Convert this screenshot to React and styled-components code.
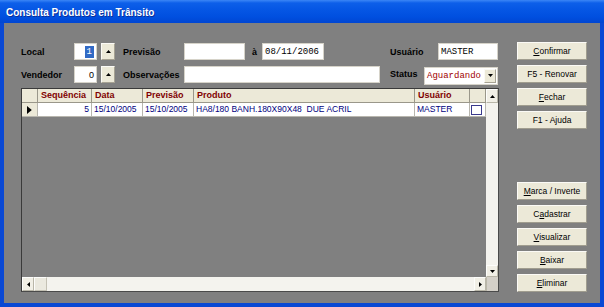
import React from 'react';
import styled, { createGlobalStyle } from 'styled-components';

const Global = createGlobalStyle`
  html, body { margin: 0; padding: 0; background: #0a4bd8; }
  body { font-family: "Liberation Sans", Arial, sans-serif; }
  * { box-sizing: border-box; }
`;

const Window = styled.div`
  width: 604px;
  height: 307px;
  display: flex;
  flex-direction: column;
  background: #0948d4;
  overflow: hidden;
`;

const TitleBar = styled.div`
  height: 23px;
  flex: none;
  display: flex;
  align-items: center;
  padding-left: 6px;
  padding-top: 1px;
  background: linear-gradient(to bottom, #3b86f6 0px, #0d5fe9 3px, #0556e4 10px, #004fdf 17px, #0046d2 23px);
  color: #fff;
  font: bold 10px "Liberation Sans", Arial, sans-serif;
  text-shadow: 1px 1px 0 #0b2f99;
`;

const Client = styled.div`
  flex: 1;
  margin: 0 4px 4px;
  background: #808080;
  display: flex;
  padding: 19px 0 0 17px;
  gap: 18px;
`;

const LeftCol = styled.div`
  width: 478px;
  display: flex;
  flex-direction: column;
`;

const FormRow = styled.div`
  display: flex;
  align-items: center;
  height: 17px;
  margin-top: ${p => p.$mt}px;
`;

const Label = styled.div`
  width: ${p => p.$w}px;
  flex: none;
  font: bold 9px "Liberation Sans", Arial, sans-serif;
  color: #000;
  padding-left: ${p => p.$pl || 0}px;
  margin-top: ${p => p.$dy || 0}px;
  white-space: nowrap;
`;

const Input = styled.div`
  width: ${p => p.$w}px;
  height: 17px;
  flex: none;
  background: #fff;
  border: 1px solid #d6d3c9;
  display: flex;
  align-items: center;
  justify-content: ${p => (p.$right ? 'flex-end' : 'flex-start')};
  padding: 0 2px;
  font: ${p => (p.$mono ? '9px "Liberation Mono", "Courier New", monospace' : '9px "Liberation Sans", Arial, sans-serif')};
  color: ${p => p.$color || '#000'};
`;

const Selected = styled.span`
  background: #316ac5;
  color: #fff;
  padding: 1px 2px;
  font-family: "Liberation Mono", monospace;
`;

const Spin = styled.div`
  width: 14px;
  height: 17px;
  flex: none;
  margin: 0 8px 0 4px;
  background: #ece9d8;
  border: 1px solid;
  border-color: #fbfaf6 #a6a293 #a6a293 #fbfaf6;
  display: flex;
  align-items: center;
  justify-content: center;
`;

const Spacer = styled.div`
  width: ${p => p.$w}px;
  flex: none;
`;

const Select = styled.div`
  width: 74px;
  height: 18px;
  flex: none;
  background: #fff;
  border: 1px solid #d6d3c9;
  display: flex;
  align-items: center;
  padding-left: 2px;
  font: 9px "Liberation Mono", "Courier New", monospace;
  color: #a00000;
  margin-top: 2px;
`;

const SelectText = styled.span`
  flex: 1;
`;

const DropBtn = styled.div`
  width: 12px;
  height: 14px;
  margin-right: 1px;
  background: #ece9d8;
  border: 1px solid;
  border-color: #fbfaf6 #a6a293 #a6a293 #fbfaf6;
  display: flex;
  align-items: center;
  justify-content: center;
`;

const Grid = styled.div`
  margin-top: 5px;
  height: 204px;
  border: 1px solid;
  border-color: #3a3a3a #4a4a4a #4a4a4a #3a3a3a;
  display: flex;
  flex-direction: column;
`;

const GridBody = styled.div`
  flex: 1;
  display: flex;
  min-height: 0;
`;

const Table = styled.div`
  width: 464px;
  display: flex;
  flex-direction: column;
`;

const Row = styled.div`
  display: flex;
  height: 14px;
`;

const HeadCell = styled.div`
  width: ${p => p.$w}px;
  flex: none;
  background: #ece9d8;
  border-right: 1px solid #9a978a;
  border-bottom: 1px solid #9a978a;
  font: bold 9px "Liberation Sans", Arial, sans-serif;
  color: #800000;
  padding-left: 3px;
  line-height: 13px;
  white-space: nowrap;
  overflow: hidden;
`;

const Cell = styled.div`
  width: ${p => p.$w}px;
  flex: none;
  background: ${p => (p.$head ? '#ece9d8' : '#fff')};
  border-right: 1px solid #b8b6ae;
  border-bottom: 1px solid #b8b6ae;
  font: 8.5px "Liberation Sans", Arial, sans-serif;
  color: #000080;
  padding: 0 2px 0 2px;
  line-height: 13px;
  text-align: ${p => (p.$right ? 'right' : 'left')};
  white-space: pre;
  overflow: hidden;
  display: ${p => (p.$center ? 'flex' : 'block')};
  align-items: center;
  justify-content: center;
`;

const CheckBox = styled.div`
  width: 11px;
  height: 10px;
  border: 1px solid #3a3a8c;
  background: #fff;
  margin-left: -2px;
`;

const VScroll = styled.div`
  width: 12px;
  display: flex;
  flex-direction: column;
  background: #f4f3ee;
`;

const ScrollBtn = styled.div`
  width: ${p => p.$w || 12}px;
  height: ${p => p.$h || 12}px;
  flex: none;
  background: #f1efe6;
  border: 1px solid;
  border-color: #fdfdfb #b9b6a8 #b9b6a8 #fdfdfb;
  display: flex;
  align-items: center;
  justify-content: center;
`;

const Track = styled.div`
  flex: 1;
  background: #f4f3ee;
`;

const HScroll = styled.div`
  height: 14px;
  flex: none;
  display: flex;
  background: #f4f3ee;
`;

const Thumb = styled.div`
  width: 13px;
  flex: none;
  background: #ebe9df;
  border: 1px solid;
  border-color: #fdfdfb #c4c1b4 #c4c1b4 #fdfdfb;
`;

const Corner = styled.div`
  width: 12px;
  flex: none;
  background: #d4d0c8;
  border-left: 1px solid #b9b6a8;
`;

const ButtonCol = styled.div`
  width: 70px;
  display: flex;
  flex-direction: column;
  gap: 5px;
`;

const Button = styled.div`
  height: 18px;
  flex: none;
  margin-top: ${p => p.$mt || 0}px;
  background: #ece9d8;
  border: 1px solid;
  border-color: #fbfaf6 #a09d8f #a09d8f #fbfaf6;
  display: flex;
  align-items: center;
  justify-content: center;
  font: 8.5px "Liberation Sans", Arial, sans-serif;
  color: #000;
  white-space: nowrap;
`;

const Tri = ({ dir = 'up', size = 5 }) => {
  const s = size;
  const pts = {
    up: `0,${s * 0.6} ${s / 2},0 ${s},${s * 0.6}`,
    down: `0,0 ${s / 2},${s * 0.6} ${s},0`,
    left: `${s * 0.6},0 0,${s / 2} ${s * 0.6},${s}`,
    right: `0,0 ${s * 0.6},${s / 2} 0,${s}`,
  }[dir];
  const w = dir === 'up' || dir === 'down' ? s : s * 0.6;
  const h = dir === 'up' || dir === 'down' ? s * 0.6 : s;
  return (
    <svg width={w} height={h} viewBox={`0 0 ${w} ${h}`} style={{ display: 'block' }}>
      <polygon points={pts} fill="#000" />
    </svg>
  );
};

const Key = ({ text, at }) => {
  if (at === undefined) return text;
  return (
    <>
      {text.slice(0, at)}
      <u>{text[at]}</u>
      {text.slice(at + 1)}
    </>
  );
};

const topButtons = [
  { text: 'Confirmar', at: 0 },
  { text: 'F5 - Renovar' },
  { text: 'Fechar', at: 0 },
  { text: 'F1 - Ajuda' },
];

const bottomButtons = [
  { text: 'Marca / Inverte', at: 0 },
  { text: 'Cadastrar', at: 1 },
  { text: 'Visualizar', at: 0 },
  { text: 'Baixar', at: 0 },
  { text: 'Eliminar', at: 0 },
];

const columns = [
  { key: 'ind', w: 16, title: '' },
  { key: 'seq', w: 54, title: 'Sequência' },
  { key: 'data', w: 51, title: 'Data' },
  { key: 'prev', w: 51, title: 'Previsão' },
  { key: 'prod', w: 221, title: 'Produto' },
  { key: 'usu', w: 55, title: 'Usuário' },
  { key: 'chk', w: 16, title: '' },
];

const row = {
  seq: '5',
  data: '15/10/2005',
  prev: '15/10/2005',
  prod: 'HA8/180 BANH.180X90X48  DUE ACRIL',
  usu: 'MASTER',
};

export default function App() {
  return (
    <>
      <Global />
      <Window>
        <TitleBar>Consulta Produtos em Trânsito</TitleBar>
        <Client>
          <LeftCol>
            <FormRow $mt={1}>
              <Label $w={53}>Local</Label>
              <Input $w={23} $right>
                <Selected>1</Selected>
              </Input>
              <Spin><Tri dir="up" /></Spin>
              <Label $w={61}>Previsão</Label>
              <Input $w={61} />
              <Label $w={17} $pl={7}>à</Label>
              <Input $w={62} $mono>08/11/2006</Input>
              <Spacer $w={66} />
              <Label $w={48}>Usuário</Label>
              <Input $w={60} $mono>MASTER</Input>
            </FormRow>
            <FormRow $mt={6}>
              <Label $w={53}>Vendedor</Label>
              <Input $w={23} $right>0</Input>
              <Spin><Tri dir="up" /></Spin>
              <Label $w={61}>Observações</Label>
              <Input $w={196} />
              <Spacer $w={10} />
              <Label $w={34} $dy={-2}>Status</Label>
              <Select>
                <SelectText>Aguardando</SelectText>
                <DropBtn><Tri dir="down" /></DropBtn>
              </Select>
            </FormRow>
            <Grid>
              <GridBody>
                <Table>
                  <Row>
                    {columns.map(c => (
                      <HeadCell key={c.key} $w={c.w}>{c.title}</HeadCell>
                    ))}
                  </Row>
                  <Row>
                    <Cell $w={16} $head $center><Tri dir="right" size={8} /></Cell>
                    <Cell $w={54} $right>{row.seq}</Cell>
                    <Cell $w={51}>{row.data}</Cell>
                    <Cell $w={51}>{row.prev}</Cell>
                    <Cell $w={221}>{row.prod}</Cell>
                    <Cell $w={55}>{row.usu}</Cell>
                    <Cell $w={16} $center><CheckBox /></Cell>
                  </Row>
                </Table>
                <VScroll>
                  <ScrollBtn $h={14}><Tri dir="up" size={5} /></ScrollBtn>
                  <Track />
                  <ScrollBtn $h={12}><Tri dir="down" size={5} /></ScrollBtn>
                </VScroll>
              </GridBody>
              <HScroll>
                <ScrollBtn $w={12} $h={14}><Tri dir="left" size={5} /></ScrollBtn>
                <Thumb />
                <Track />
                <ScrollBtn $w={12} $h={14}><Tri dir="right" size={5} /></ScrollBtn>
                <Corner />
              </HScroll>
            </Grid>
          </LeftCol>
          <ButtonCol>
            {topButtons.map(b => (
              <Button key={b.text}><Key text={b.text} at={b.at} /></Button>
            ))}
            {bottomButtons.map((b, i) => (
              <Button key={b.text} $mt={i === 0 ? 48 : 0}><Key text={b.text} at={b.at} /></Button>
            ))}
          </ButtonCol>
        </Client>
      </Window>
    </>
  );
}
